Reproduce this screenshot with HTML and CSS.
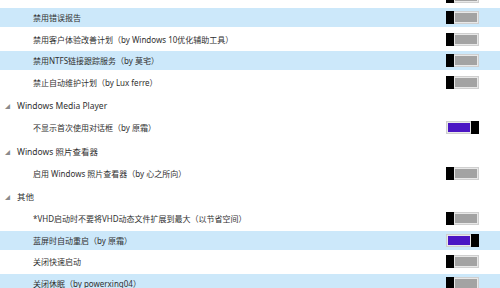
FILE: index.html
```html
<!DOCTYPE html>
<html lang="zh-CN">
<head>
<meta charset="utf-8">
<link rel="stylesheet" href="styles.css">
</head>
<body>
<div class="list">
  <div class="row hidden-row"><span class="label">禁用错误报告</span><span class="toggle"><span class="knob"></span><span class="fill"></span></span></div>
  <div class="row sel"><span class="label">禁用错误报告</span><span class="toggle"><span class="knob"></span><span class="fill"></span></span></div>
  <div class="row"><span class="label">禁用客户体验改善计划（by Windows 10优化辅助工具）</span><span class="toggle"><span class="knob"></span><span class="fill"></span></span></div>
  <div class="row sel"><span class="label">禁用NTFS链接跟踪服务（by 莫宅）</span><span class="toggle"><span class="knob"></span><span class="fill"></span></span></div>
  <div class="row"><span class="label">禁止自动维护计划（by Lux ferre）</span><span class="toggle"><span class="knob"></span><span class="fill"></span></span></div>
  <div class="group"><span class="arrow">◢</span><span class="gtitle">Windows Media Player</span></div>
  <div class="row"><span class="label">不显示首次使用对话框（by 原霜）</span><span class="toggle on"><span class="fill"></span><span class="knob"></span></span></div>
  <div class="group"><span class="arrow">◢</span><span class="gtitle">Windows 照片查看器</span></div>
  <div class="row"><span class="label">启用 Windows 照片查看器（by 心之所向）</span><span class="toggle"><span class="knob"></span><span class="fill"></span></span></div>
  <div class="group"><span class="arrow">◢</span><span class="gtitle">其他</span></div>
  <div class="row"><span class="label">*VHD启动时不要将VHD动态文件扩展到最大（以节省空间）</span><span class="toggle"><span class="knob"></span><span class="fill"></span></span></div>
  <div class="row sel"><span class="label">蓝屏时自动重启（by 原霜）</span><span class="toggle on"><span class="fill"></span><span class="knob"></span></span></div>
  <div class="row"><span class="label">关闭快速启动</span><span class="toggle"><span class="knob"></span><span class="fill"></span></span></div>
  <div class="row sel"><span class="label">关闭休眠（by powerxing04）</span><span class="toggle"><span class="knob"></span><span class="fill"></span></span></div>
</div>
</body>
</html>
```

FILE: styles.css
```css
html, body {
  margin: 0;
  padding: 0;
  background: #ffffff;
  overflow: hidden;
}
body {
  width: 500px;
  height: 288px;
  font-family: "Noto Sans", "Noto Sans CJK SC", sans-serif;
  font-size: 8px;
  color: #303030;
}
.list {
  display: flex;
  flex-direction: column;
  margin-top: -14.5px;
}
.row {
  display: flex;
  align-items: center;
  height: 19px;
  margin: 1px 0 1.5px;
  padding-left: 33px;
  padding-right: 21px;
}
.row.sel {
  background: #cce8fa;
}
.hidden-row .label {
  visibility: hidden;
}
.label {
  flex: 1;
  white-space: nowrap;
  line-height: 19px;
}
.toggle {
  display: flex;
  width: 31px;
  height: 11px;
  border: 1px solid #cfcfcf;
  background: #e8e8e8;
}
.toggle .knob {
  width: 8px;
  height: 13px;
  margin: -1px 0;
  background: #000000;
  flex: none;
}
.toggle .fill {
  flex: 1;
  margin: 1px;
  background: #a3a3a3;
}
.toggle .knob:first-child {
  margin-left: -1px;
}
.toggle.on .fill {
  background: #4b16c4;
}
.toggle.on .knob {
  margin-right: -1px;
}
.group {
  display: flex;
  align-items: center;
  height: 24px;
  padding-left: 5px;
}
.arrow {
  font-size: 5px;
  color: #8a8a8a;
  width: 12px;
  margin-top: 1px;
}
.gtitle {
  font-size: 8.5px;
  color: #303030;
}
```
